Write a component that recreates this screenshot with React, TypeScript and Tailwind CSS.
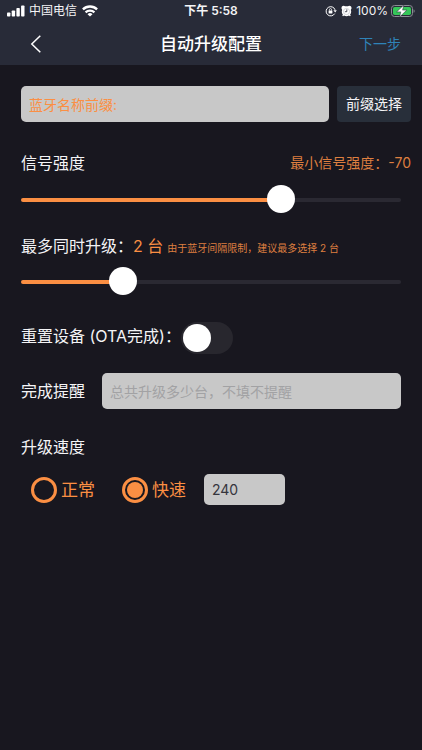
import { useState } from 'react';

const field = 'rounded-[5px] bg-[#c8c8c8] px-2 text-sm outline-none min-w-0';

function StatusBar() {
  return (
    <div className="grid h-[22px] grid-cols-[1fr_auto_1fr] items-center px-[7px] text-xs leading-4">
      <div className="flex items-center">
        <svg width="18" height="12" viewBox="0 0 18 12" fill="#fff" aria-hidden="true">
          <rect x="0" y="7.5" width="3.4" height="4" rx="0.8" />
          <rect x="4.7" y="5.5" width="3.4" height="6" rx="0.8" />
          <rect x="9.4" y="3" width="3.4" height="8.5" rx="0.8" />
          <rect x="14.1" y="0.5" width="3.4" height="11" rx="0.8" />
        </svg>
        <span className="ml-1">中国电信</span>
        <svg className="ml-[5px]" width="16" height="12" viewBox="0 0 16 12" fill="none" stroke="#fff" strokeWidth="2.3" aria-hidden="true">
          <path d="M0.9 4.4a10.1 10.1 0 0 1 14.2 0" />
          <path d="M3.6 7.4a6.2 6.2 0 0 1 8.8 0" />
          <path d="M8 11.6L5.5 9.3a3.6 3.6 0 0 1 5 0z" fill="#fff" stroke="none" />
        </svg>
      </div>
      <div className="flex items-center gap-[3px] font-semibold">
        <span>下午</span>
        <span>5:58</span>
      </div>
      <div className="flex items-center justify-end">
        <svg width="12" height="12" viewBox="0 0 12 12" fill="none" stroke="#fff" strokeWidth="1" aria-hidden="true">
          <path d="M9.7 8.6A4.6 4.6 0 1 1 10.1 4.9" />
          <path d="M8.4 5.2h3.4l-1.6 2.4z" fill="#fff" stroke="none" />
          <rect x="3.6" y="5.4" width="3.8" height="3" rx="0.4" fill="#fff" stroke="none" />
          <path d="M4.4 5.6V4.7a1.1 1.1 0 0 1 2.2 0v0.9" strokeWidth="0.8" />
        </svg>
        <svg className="ml-1" width="11" height="12" viewBox="0 0 11 12" aria-hidden="true">
          <path d="M0.5 3.4a2.3 2.3 0 0 1 3.6-2.2h2.8a2.3 2.3 0 0 1 3.6 2.2L9.8 5a4.6 4.6 0 0 1-0.7 4.7l0.7 1.1-0.9 0.5-0.9-0.8a4.6 4.6 0 0 1-5 0l-0.9 0.8-0.9-0.5 0.7-1.1A4.6 4.6 0 0 1 1.2 5z" fill="#fff" />
          <circle cx="5.5" cy="6.5" r="3.1" fill="none" stroke="#a9abb2" strokeWidth="0.5" />
          <path d="M5.8 4.4v2.3H3.9" stroke="#282b38" strokeWidth="0.8" fill="none" />
        </svg>
        <span className="ml-1">100%</span>
        <svg className="ml-[3px]" width="24" height="14" viewBox="0 0 24 14" aria-hidden="true">
          <rect x="0.5" y="1.5" width="21" height="11" rx="3" fill="none" stroke="#8b8d94" />
          <rect x="2" y="3" width="18" height="8" rx="1.8" fill="#35c759" />
          <path d="M22.6 5.2v3.6c1.4-.5 1.4-3.1 0-3.6z" fill="#8b8d94" />
          <path d="M12.8 1L5.6 7.9h4.2L8.6 13l7.2-6.9h-4.2z" fill="#fff" stroke="#282b38" strokeWidth="0.5" />
        </svg>
      </div>
    </div>
  );
}

type SliderProps = {
  label: string;
  min: number;
  max: number;
  value: number;
  onChange: (value: number) => void;
};

function Slider({ label, min, max, value, onChange }: SliderProps) {
  const ratio = (value - min) / (max - min);
  return (
    <input
      type="range"
      aria-label={label}
      min={min}
      max={max}
      value={value}
      onChange={(e) => onChange(Number(e.target.value))}
      className="block h-7 w-full appearance-none bg-transparent outline-none [&::-webkit-slider-runnable-track]:h-1 [&::-webkit-slider-runnable-track]:rounded-full [&::-webkit-slider-runnable-track]:bg-[linear-gradient(to_right,#fb8f43_var(--fill),#2a2932_var(--fill))] [&::-webkit-slider-thumb]:-mt-[13px] [&::-webkit-slider-thumb]:size-7 [&::-webkit-slider-thumb]:appearance-none [&::-webkit-slider-thumb]:rounded-full [&::-webkit-slider-thumb]:bg-white"
      style={{ '--fill': `${ratio * 100}%` } as React.CSSProperties}
    />
  );
}

type SpeedProps = {
  label: string;
  checked: boolean;
  onSelect: () => void;
};

function SpeedOption({ label, checked, onSelect }: SpeedProps) {
  return (
    <label className="flex items-center gap-1 text-[17px] leading-6 text-[#fb8f43]">
      <input
        type="radio"
        name="speed"
        checked={checked}
        onChange={onSelect}
        className="size-[26px] appearance-none rounded-full border-3 border-[#fb8f43] bg-clip-content p-[2px] checked:bg-[#fb8f43]"
      />
      {label}
    </label>
  );
}

export default function App() {
  const [prefix, setPrefix] = useState('');
  const [signal, setSignal] = useState(70);
  const [count, setCount] = useState(2);
  const [reset, setReset] = useState(false);
  const [total, setTotal] = useState('');
  const [speed, setSpeed] = useState('fast');
  const [rate, setRate] = useState('240');

  return (
    <div className="min-h-screen bg-[#18171f] font-[Inter,'Noto_Sans_CJK_SC',sans-serif] text-[#f4f4f6]">
      <header className="h-[65px] bg-[#282b38]">
        <StatusBar />
        <nav className="grid h-[43px] grid-cols-[1fr_auto_1fr] items-center px-[21px]">
          <button type="button" aria-label="返回" className="justify-self-start pl-[9px]">
            <svg width="12" height="18" viewBox="0 0 12 18" fill="none" stroke="#fff" strokeWidth="1.5" aria-hidden="true">
              <path d="M10.3 0.8L1.8 9l8.5 8.2" />
            </svg>
          </button>
          <h1 className="text-[17px] leading-6 font-medium text-white">自动升级配置</h1>
          <button type="button" className="justify-self-end text-sm text-[#2f83b8]">下一步</button>
        </nav>
      </header>

      <main className="px-[21px] pt-[21px] text-base leading-6">
        <div className="-mr-[10px] flex gap-2">
          <input
            aria-label="蓝牙名称前缀"
            placeholder="蓝牙名称前缀:"
            value={prefix}
            onChange={(e) => setPrefix(e.target.value)}
            className={`${field} h-9 flex-1 text-[#333] placeholder:text-[#fb8f43]`}
          />
          <button type="button" className="h-9 w-[74px] rounded-[4px] bg-[#282f3a] text-sm">前缀选择</button>
        </div>

        <section className="mt-[29px]">
          <div className="-mr-[10px] flex items-center justify-between">
            <h2>信号强度</h2>
            <span className="text-sm leading-6 text-[#de7f40]">最小信号强度：-{signal}</span>
          </div>
          <div className="mt-[11px]">
            <Slider label="信号强度" min={0} max={100} value={signal} onChange={setSignal} />
          </div>
        </section>

        <section className="mt-5">
          <div className="flex items-baseline whitespace-nowrap">
            <h2>最多同时升级：</h2>
            <span className="text-[#fb8f43]">{count} 台</span>
            <span className="ml-1 text-[10px] text-[#de7f40]">由于蓝牙间隔限制，建议最多选择 2 台</span>
          </div>
          <div className="mt-2">
            <Slider label="最多同时升级" min={1} max={5} value={count} onChange={setCount} />
          </div>
        </section>

        <div className="mt-[26px] flex h-8 items-start">
          <label htmlFor="reset" className="leading-7">重置设备 (OTA完成)：</label>
          <input
            id="reset"
            type="checkbox"
            role="switch"
            checked={reset}
            onChange={(e) => setReset(e.target.checked)}
            className="h-8 w-[52px] appearance-none rounded-full bg-[#28272e] p-[2px] before:block before:size-7 before:rounded-full before:bg-white checked:bg-[#fb8f43] checked:before:ml-5"
          />
        </div>

        <div className="mt-[19px] flex items-center gap-[17px]">
          <label htmlFor="total">完成提醒</label>
          <input
            id="total"
            placeholder="总共升级多少台，不填不提醒"
            value={total}
            onChange={(e) => setTotal(e.target.value)}
            className={`${field} h-9 flex-1 text-[#333] placeholder:text-[#a2a2a4]`}
          />
        </div>

        <h2 className="mt-[26px]">升级速度</h2>
        <div className="mt-[15px] flex items-center pl-[10px]">
          <SpeedOption label="正常" checked={speed === 'normal'} onSelect={() => setSpeed('normal')} />
          <div className="ml-[27px]">
            <SpeedOption label="快速" checked={speed === 'fast'} onSelect={() => setSpeed('fast')} />
          </div>
          <input
            aria-label="速度值"
            value={rate}
            onChange={(e) => setRate(e.target.value)}
            className={`${field} ml-[18px] h-[31px] w-[81px] text-[#35353d]`}
          />
        </div>
      </main>
    </div>
  );
}
